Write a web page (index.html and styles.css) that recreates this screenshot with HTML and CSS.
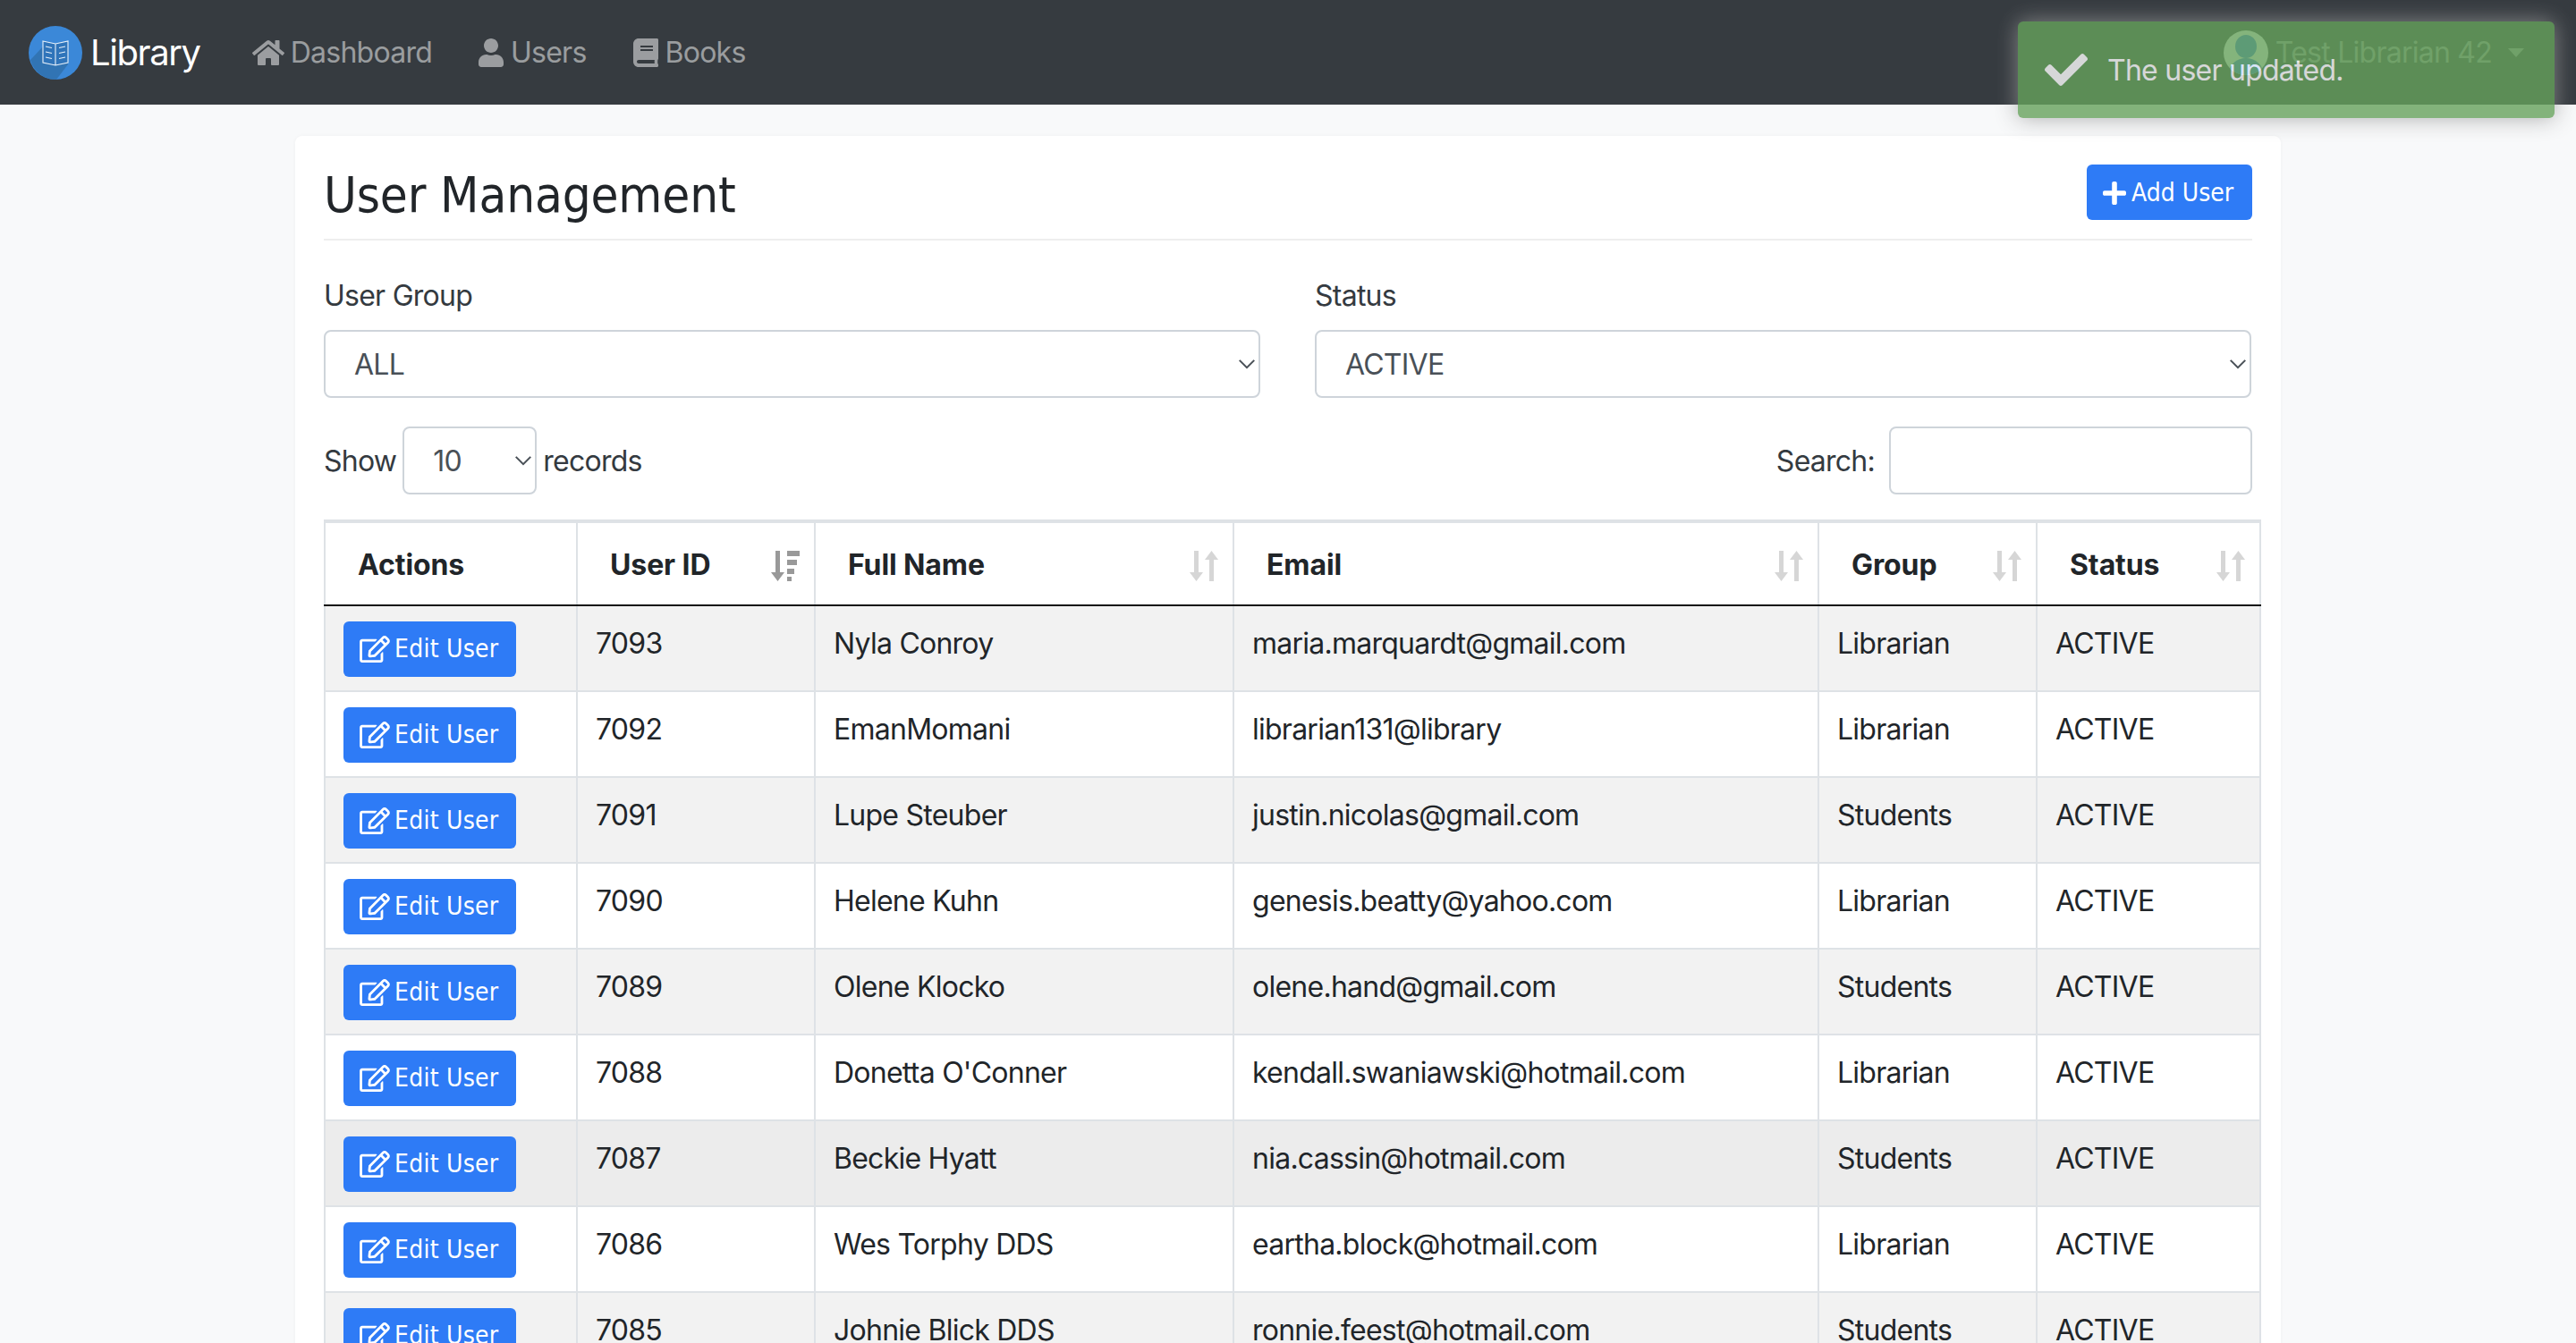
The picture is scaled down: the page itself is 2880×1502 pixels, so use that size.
FILE: index.html
```html
<!DOCTYPE html>
<html lang="en">
<head>
<meta charset="utf-8">
<title>User Management</title>
<link rel="stylesheet" href="styles.css">
</head>
<body>
<svg class="defs" width="0" height="0" aria-hidden="true">
  <symbol id="i-edit" viewBox="0 0 576 512"><path d="M402.3 344.9l32-32c5-5 13.7-1.5 13.7 5.7V464c0 26.5-21.5 48-48 48H48c-26.5 0-48-21.5-48-48V112c0-26.5 21.5-48 48-48h273.5c7.1 0 10.7 8.6 5.7 13.7l-32 32c-1.5 1.5-3.5 2.3-5.7 2.3H48v352h352V350.5c0-2.1.8-4.1 2.3-5.6zm156.6-201.8L296.3 405.7l-90.4 10c-26.2 2.9-48.5-19.2-45.6-45.6l10-90.4L432.9 17.1c22.9-22.9 59.9-22.9 82.7 0l43.2 43.2c22.9 22.9 22.9 60 .1 82.8zM460.1 174L402 115.9 216.2 301.8l-7.3 65.3 65.3-7.3L460.1 174zm64.8-79.7l-43.2-43.2c-4.1-4.1-10.8-4.1-14.8 0L436 82l58.1 58.1 30.9-30.9c4-4.2 4-10.8-.1-14.9z"/></symbol>
  <symbol id="i-sort" viewBox="0 0 32 34"><path d="M5 0h5v24h5l-7.5 10L0 24h5zM22 34V10h-5L24.500 0 32 10h-5v24z"/></symbol>
  <symbol id="i-sorted" viewBox="0 0 32 34"><path d="M5 0h5v24h5l-7.500 10L0 24h5zM18 0h14v6H18zM18 10h11v6H18zM18 20h8v6h-8zM18 29h5v5h-5z"/></symbol>
  <symbol id="i-user" viewBox="0 0 448 512"><path d="M224 256c70.700 0 128-57.300 128-128S294.700 0 224 0 96 57.300 96 128s57.300 128 128 128zm89.600 32h-16.700c-22.200 10.200-46.900 16-72.900 16s-50.600-5.800-72.900-16h-16.700C60.200 288 0 348.200 0 422.400V464c0 26.500 21.500 48 48 48h352c26.500 0 48-21.500 48-48v-41.600c0-74.200-60.200-134.400-134.400-134.400z"/></symbol>
</svg>

<nav class="navbar">
  <a class="brand">
    <svg class="logo" viewBox="0 0 60 60" aria-hidden="true">
      <circle cx="30" cy="30" r="30" fill="#3b88d8"/>
      <path d="M16 23 L44 17 L44 43 L31 60 A30 30 0 0 1 2 38 Z" fill="#2f6ea8" opacity=".75"/>
      <path d="M16 17l14 3 14-3v24l-14 3-14-3zM30 20v24M19 23l7 1.500M19 29l7 1.500M19 35l7 1.500M41 23l-7 1.500M41 29l-7 1.500M41 35l-7 1.500" fill="#2f74ba" stroke="#e8f1fa" stroke-width="1.100"/>
    </svg>
    <span>Library</span>
  </a>
  <a class="nav-link nav-link-home">
    <svg class="nav-home" viewBox="0 0 576 512" aria-hidden="true"><path d="M280.370 148.260L96 300.110V464a16 16 0 0 0 16 16l112.060-.29a16 16 0 0 0 15.920-16V368a16 16 0 0 1 16-16h64a16 16 0 0 1 16 16v95.640a16 16 0 0 0 16 16.050L464 480a16 16 0 0 0 16-16V300L295.670 148.260a12.190 12.190 0 0 0-15.300 0zM571.600 251.470L488 182.560V44.050a12 12 0 0 0-12-12h-56a12 12 0 0 0-12 12v72.610L318.470 43a48 48 0 0 0-61 0L4.340 251.470a12 12 0 0 0-1.600 16.900l25.500 31A12 12 0 0 0 45.150 301l235.220-193.740a12.190 12.190 0 0 1 15.300 0L530.900 301a12 12 0 0 0 16.900-1.600l25.500-31a12 12 0 0 0-1.700-16.930z"/></svg>
    <span>Dashboard</span>
  </a>
  <a class="nav-link">
    <svg class="nav-glyph" viewBox="0 0 448 512" aria-hidden="true"><use href="#i-user"/></svg>
    <span>Users</span>
  </a>
  <a class="nav-link">
    <svg class="nav-glyph" viewBox="0 0 448 512" aria-hidden="true"><path d="M448 360V24c0-13.300-10.700-24-24-24H96C43 0 0 43 0 96v320c0 53 43 96 96 96h328c13.300 0 24-10.700 24-24v-16c0-7.500-3.500-14.300-8.900-18.700-4.200-15.400-4.200-59.300 0-74.700 5.400-4.300 8.900-11.100 8.900-18.600zM128 134c0-3.300 2.700-6 6-6h212c3.300 0 6 2.700 6 6v20c0 3.300-2.700 6-6 6H134c-3.300 0-6-2.700-6-6v-20zm0 64c0-3.300 2.700-6 6-6h212c3.300 0 6 2.700 6 6v20c0 3.300-2.700 6-6 6H134c-3.300 0-6-2.700-6-6v-20zm253.400 250H96c-17.700 0-32-14.300-32-32 0-17.600 14.400-32 32-32h285.400c-1.900 17.100-1.900 46.900 0 64z"/></svg>
    <span>Books</span>
  </a>
  <a class="nav-user">
    <svg class="avatar" viewBox="0 0 50 50" aria-hidden="true">
      <defs><clipPath id="av"><circle cx="25" cy="25" r="25"/></clipPath></defs>
      <circle cx="25" cy="25" r="25" fill="#fff"/>
      <g clip-path="url(#av)" fill="#3b7fe0"><ellipse cx="25" cy="18" rx="12" ry="13"/><ellipse cx="25" cy="48" rx="19" ry="17"/></g>
    </svg>
    <span>Test Librarian 42</span>
    <i class="caret"></i>
  </a>
</nav>

<div class="toast">
  <svg class="toast-icon" viewBox="0 0 512 512" aria-hidden="true"><path d="M173.898 439.404l-166.400-166.400c-9.997-9.997-9.997-26.206 0-36.204l36.203-36.204c9.997-9.998 26.207-9.998 36.204 0L192 312.690 432.095 72.596c9.997-9.997 26.207-9.997 36.204 0l36.203 36.204c9.997 9.997 9.997 26.206 0 36.204l-294.400 294.401c-9.998 9.997-26.207 9.997-36.204-.001z"/></svg>
  <span>The user updated.</span>
</div>

<main class="card">
  <header class="card-head">
    <h1>User Management</h1>
    <a class="btn btn-add">
      <svg class="plus" viewBox="0 0 448 512" aria-hidden="true"><path d="M416 208H272V64c0-17.670-14.330-32-32-32h-32c-17.670 0-32 14.330-32 32v144H32c-17.670 0-32 14.330-32 32v32c0 17.670 14.330 32 32 32h144v144c0 17.670 14.330 32 32 32h32c17.670 0 32-14.330 32-32V304h144c17.670 0 32-14.330 32-32v-32c0-17.670-14.330-32-32-32z"/></svg>
      <span>Add User</span>
    </a>
  </header>

  <section class="filters">
    <label class="field">
      <span>User Group</span>
      <span class="select">ALL<svg class="chev" viewBox="0 0 16 10" aria-hidden="true"><path d="M2 2l6 6 6-6"/></svg></span>
    </label>
    <label class="field">
      <span>Status</span>
      <span class="select">ACTIVE<svg class="chev" viewBox="0 0 16 10" aria-hidden="true"><path d="M2 2l6 6 6-6"/></svg></span>
    </label>
  </section>

  <section class="tools">
    <div class="length">
      <span class="tool-label">Show</span>
      <span class="select select-sm">10<svg class="chev" viewBox="0 0 16 10" aria-hidden="true"><path d="M2 2l6 6 6-6"/></svg></span>
      <span class="tool-label">records</span>
    </div>
    <div class="search">
      <span class="tool-label">Search:</span>
      <span class="input"></span>
    </div>
  </section>

  <table class="users">
    <colgroup>
      <col class="c1"><col class="c2"><col class="c3"><col class="c4"><col class="c5"><col class="c6">
    </colgroup>
    <thead>
      <tr>
        <th>Actions</th>
        <th>User ID<svg class="sort sorted" aria-hidden="true"><use href="#i-sorted"/></svg></th>
        <th>Full Name<svg class="sort" aria-hidden="true"><use href="#i-sort"/></svg></th>
        <th>Email<svg class="sort" aria-hidden="true"><use href="#i-sort"/></svg></th>
        <th>Group<svg class="sort" aria-hidden="true"><use href="#i-sort"/></svg></th>
        <th>Status<svg class="sort" aria-hidden="true"><use href="#i-sort"/></svg></th>
      </tr>
    </thead>
    <tbody>
      <tr class="odd"><td><a class="btn btn-edit"><svg class="edit" aria-hidden="true"><use href="#i-edit"/></svg><span>Edit User</span></a></td><td>7093</td><td>Nyla Conroy</td><td>maria.marquardt@gmail.com</td><td>Librarian</td><td>ACTIVE</td></tr>
      <tr><td><a class="btn btn-edit"><svg class="edit" aria-hidden="true"><use href="#i-edit"/></svg><span>Edit User</span></a></td><td>7092</td><td>EmanMomani</td><td>librarian131@library</td><td>Librarian</td><td>ACTIVE</td></tr>
      <tr class="odd"><td><a class="btn btn-edit"><svg class="edit" aria-hidden="true"><use href="#i-edit"/></svg><span>Edit User</span></a></td><td>7091</td><td>Lupe Steuber</td><td>justin.nicolas@gmail.com</td><td>Students</td><td>ACTIVE</td></tr>
      <tr><td><a class="btn btn-edit"><svg class="edit" aria-hidden="true"><use href="#i-edit"/></svg><span>Edit User</span></a></td><td>7090</td><td>Helene Kuhn</td><td>genesis.beatty@yahoo.com</td><td>Librarian</td><td>ACTIVE</td></tr>
      <tr class="odd"><td><a class="btn btn-edit"><svg class="edit" aria-hidden="true"><use href="#i-edit"/></svg><span>Edit User</span></a></td><td>7089</td><td>Olene Klocko</td><td>olene.hand@gmail.com</td><td>Students</td><td>ACTIVE</td></tr>
      <tr><td><a class="btn btn-edit"><svg class="edit" aria-hidden="true"><use href="#i-edit"/></svg><span>Edit User</span></a></td><td>7088</td><td>Donetta O'Conner</td><td>kendall.swaniawski@hotmail.com</td><td>Librarian</td><td>ACTIVE</td></tr>
      <tr class="hover"><td><a class="btn btn-edit"><svg class="edit" aria-hidden="true"><use href="#i-edit"/></svg><span>Edit User</span></a></td><td>7087</td><td>Beckie Hyatt</td><td>nia.cassin@hotmail.com</td><td>Students</td><td>ACTIVE</td></tr>
      <tr><td><a class="btn btn-edit"><svg class="edit" aria-hidden="true"><use href="#i-edit"/></svg><span>Edit User</span></a></td><td>7086</td><td>Wes Torphy DDS</td><td>eartha.block@hotmail.com</td><td>Librarian</td><td>ACTIVE</td></tr>
      <tr class="odd"><td><a class="btn btn-edit"><svg class="edit" aria-hidden="true"><use href="#i-edit"/></svg><span>Edit User</span></a></td><td>7085</td><td>Johnie Blick DDS</td><td>ronnie.feest@hotmail.com</td><td>Students</td><td>ACTIVE</td></tr>
    </tbody>
  </table>
</main>
</body>
</html>
```
FILE: styles.css
```css
* { box-sizing: border-box; }
html, body { height: 1502px; overflow: hidden; }
body {
  margin: 0;
  background: #f8f9fa;
  color: #212529;
  font-family: Inter, "Liberation Sans", sans-serif;
  font-size: 32px;
  line-height: 48px;
  letter-spacing: -.75px;
}
.defs { display: block; height: 0; }

.navbar {
  display: flex;
  align-items: center;
  height: 117px;
  padding: 0 32px;
  background: #363b40;
  color: rgba(255, 255, 255, .5);
}
.brand {
  display: flex;
  align-items: center;
  gap: 9px;
  margin-right: 58px;
  color: #fff;
  font-size: 40px;
  letter-spacing: -1.400px;
}
.logo { width: 60px; height: 60px; }
.nav-link { display: flex; align-items: center; gap: 8px; margin-right: 52px; }
.nav-link-home { gap: 7px; }
.nav-home { width: 36px; height: 32px; fill: currentColor; }
.nav-glyph { width: 28px; height: 32px; fill: currentColor; }
.nav-user { display: flex; align-items: center; gap: 8px; margin-left: auto; margin-right: 26px; }
.avatar { width: 50px; height: 50px; }
.caret {
  margin-left: 10px;
  border-top: 10px solid currentColor;
  border-left: 9px solid transparent;
  border-right: 9px solid transparent;
}

.toast {
  position: absolute;
  top: 24px;
  right: 24px;
  display: flex;
  align-items: flex-start;
  width: 600px;
  height: 108px;
  padding: 31px 30px 29px 100px;
  border-radius: 6px;
  background: #66a25c;
  box-shadow: 0 0 24px #999;
  color: #fff;
  opacity: .8;
}
.toast-icon { position: absolute; left: 30px; top: 30px; width: 48px; height: 48px; fill: #fff; }

.card {
  width: 2220px;
  height: 1400px;
  margin: 35px 0 0 330px;
  padding: 32px;
  border-radius: 8px;
  background: #fff;
  box-shadow: 0 0 4px rgba(0, 0, 0, .04);
}
.card-head {
  display: flex;
  justify-content: space-between;
  align-items: flex-start;
  height: 85px;
  border-bottom: 2px solid #eeeeee;
}
h1 {
  margin: 0;
  font-family: "DejaVu Sans Condensed", "DejaVu Sans", sans-serif;
  font-stretch: condensed;
  font-size: 56px;
  font-weight: 400;
  line-height: 68px;
  letter-spacing: -.15px;
}
.btn {
  display: inline-flex;
  align-items: center;
  height: 62px;
  border-radius: 6px;
  background: #2e7bf6;
  color: #fff;
  font-family: "DejaVu Sans Condensed", "DejaVu Sans", sans-serif;
  font-stretch: condensed;
  font-size: 28px;
  letter-spacing: 0;
}
.btn-add { width: 185px; padding: 2px 0 0 18px; gap: 6px; }
.plus { width: 26px; height: 30px; fill: #fff; }

.filters { display: flex; gap: 61px; margin-top: 38px; }
.field { display: flex; flex-direction: column; gap: 14px; width: 1047px; color: #343a40; }
.select {
  position: relative;
  display: flex;
  align-items: center;
  height: 76px;
  padding: 2px 32px 0;
  border: 2px solid #ced4da;
  border-radius: 8px;
  background: #fff;
  color: #495057;
}
.chev {
  position: absolute;
  right: 2px;
  top: 29px;
  width: 22px;
  height: 14px;
  fill: none;
  stroke: #495057;
  stroke-width: 1.500;
}
.tools { display: flex; justify-content: space-between; margin-top: 32px; height: 76px; }
.length, .search { display: flex; align-items: center; color: #343a40; }
.length { gap: 7px; }
.search { gap: 16px; }
.tool-label { padding-top: 2px; }
.select-sm { width: 150px; }
.input {
  display: block;
  width: 406px;
  height: 76px;
  border: 2px solid #ced4da;
  border-radius: 8px;
  background: #fff;
}

.users {
  width: 2164px;
  margin-top: 28px;
  table-layout: fixed;
  border-collapse: collapse;
  border: 4px solid #dee2e6;
  border-width: 4px 2px 2px 2px;
}
.c1 { width: 282px; }
.c2 { width: 266px; }
.c3 { width: 468px; }
.c4 { width: 654px; }
.c5 { width: 244px; }
.c6 { width: 250px; }
th {
  position: relative;
  height: 94px;
  padding: 2px 36px 0;
  border: 2px solid #dee2e6;
  border-bottom: 2px solid #111;
  border-top: 0;
  text-align: left;
  font-weight: 700;
  letter-spacing: -.1px;
}
td {
  height: 96px;
  padding: 18px 20px 0;
  border: 2px solid #dee2e6;
  vertical-align: top;
}
.odd td { background: #f2f2f2; }
.hover td { background: #ececec; }
td:first-child { padding: 17px 20px 0; }
.sort {
  position: absolute;
  right: 16px;
  top: 31px;
  width: 32px;
  height: 34px;
  fill: #d6d6d6;
}
.sorted { fill: #999; }
.btn-edit { width: 193px; padding-left: 18px; gap: 5px; vertical-align: top; letter-spacing: .25px; }
.edit { width: 34px; height: 30px; fill: #fff; }
```
